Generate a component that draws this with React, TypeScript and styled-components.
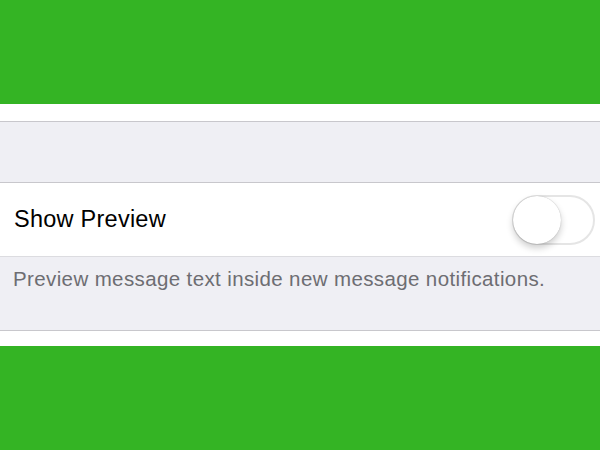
import React, { useState } from "react";
import styled, { createGlobalStyle } from "styled-components";

const Global = createGlobalStyle`
  html, body { margin: 0; padding: 0; background: #ffffff; }
  body { font-family: "Liberation Sans", Arial, sans-serif; }
`;

const Page = styled.div`
  width: 600px;
  height: 450px;
  display: flex;
  flex-direction: column;
  background: #ffffff;
  overflow: hidden;
`;

const Bar = styled.div<{ $h: number }>`
  height: ${(p) => p.$h}px;
  background: #34b424;
  flex-shrink: 0;
`;

const Spacer = styled.div<{ $h: number }>`
  height: ${(p) => p.$h}px;
  flex-shrink: 0;
`;

const GroupHeader = styled.div`
  height: 60px;
  background: #efeff4;
  border-top: 1px solid #c8c7cc;
  border-bottom: 1px solid #c8c7cc;
  flex-shrink: 0;
`;

const Row = styled.div`
  height: 73px;
  display: flex;
  align-items: center;
  justify-content: space-between;
  padding: 0 5px 0 14px;
  background: #ffffff;
  flex-shrink: 0;
`;

const Label = styled.span`
  font-size: 23.5px;
  color: #000000;
  letter-spacing: 0.25px;
`;

const Footer = styled.div`
  height: 75px;
  background: #efeff4;
  border-top: 1px solid #dcdce0;
  border-bottom: 1px solid #c8c7cc;
  padding: 10px 10px 0 13px;
  box-sizing: border-box;
  font-size: 20.5px;
  letter-spacing: 0.38px;
  color: #6d6d72;
  white-space: nowrap;
  flex-shrink: 0;
`;

const Track = styled.button<{ $on: boolean }>`
  position: relative;
  width: 83px;
  height: 50px;
  border-radius: 25px;
  border: 2px solid #e5e5e5;
  background: ${(p) => (p.$on ? "#4cd964" : "#ffffff")};
  padding: 0;
  cursor: pointer;
  box-sizing: border-box;
`;

const Knob = styled.span<{ $on: boolean }>`
  position: absolute;
  top: -1px;
  left: ${(p) => (p.$on ? "33px" : "-1px")};
  width: 48px;
  height: 48px;
  border-radius: 50%;
  background: #ffffff;
  box-shadow: 0 4px 7px rgba(0, 0, 0, 0.2), 0 0 1px rgba(0, 0, 0, 0.3);
`;

export default function App() {
  const [on, setOn] = useState(false);
  return (
    <Page>
      <Global />
      <Bar $h={104} />
      <Spacer $h={17} />
      <GroupHeader />
      <Row>
        <Label>Show Preview</Label>
        <Track $on={on} onClick={() => setOn(!on)} aria-pressed={on}>
          <Knob $on={on} />
        </Track>
      </Row>
      <Footer>Preview message text inside new message notifications.</Footer>
      <Spacer $h={15} />
      <Bar $h={104} />
    </Page>
  );
}
